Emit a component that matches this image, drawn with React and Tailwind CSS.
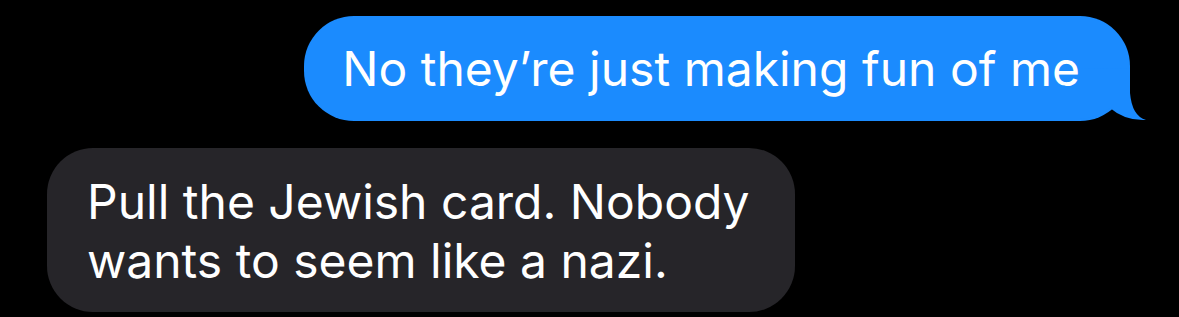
export default function App() {
  return (
    <div className="w-[1179px] h-[317px] bg-black overflow-hidden" style={{ fontFamily: '"Inter", "Roboto", "Liberation Sans", sans-serif' }}>
      <div className="flex justify-end pt-[16px] pr-[49px]">
        <div className="relative bg-[#1b8bfe] rounded-[50px] h-[105px] pl-[38px] pr-[50px] flex items-center">
          <span className="text-white text-[48px] leading-none whitespace-nowrap">No they’re just making fun of me</span>
          <svg className="absolute right-[-18px] bottom-[-1px]" width="70" height="56" viewBox="0 0 70 56">
            <path d="M52 2 L52 27 Q54 50 68 54 Q47 55 32 42 Q20 51 2 53 L2 3 Z" fill="#1b8bfe" />
          </svg>
        </div>
      </div>
      <div className="flex pl-[47px] pt-[27px]">
        <div className="bg-[#262529] rounded-[46px] w-[748px] pl-[40px] pt-[24px] pb-[22px]">
          <div className="text-white text-[48px] leading-[59px] whitespace-nowrap">Pull the Jewish card. Nobody</div>
          <div className="text-white text-[48px] leading-[59px] whitespace-nowrap">wants to seem like a nazi.</div>
        </div>
      </div>
    </div>
  );
}
